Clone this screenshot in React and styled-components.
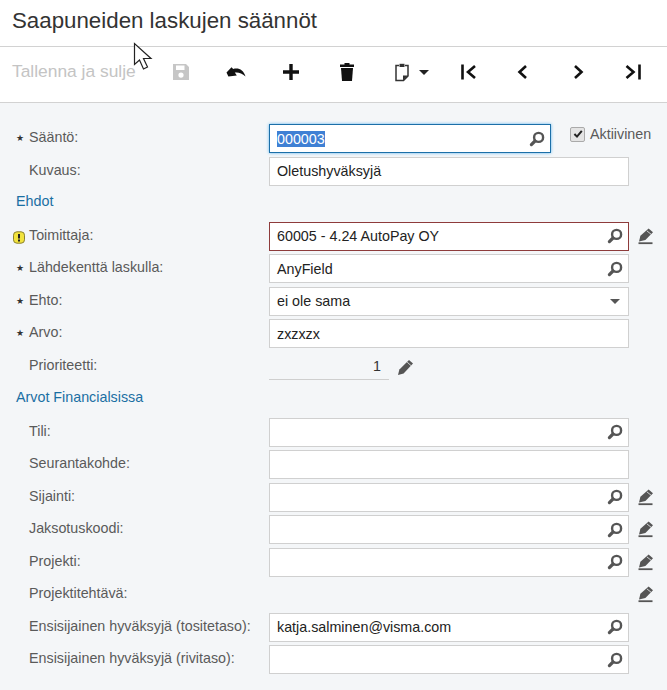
import styled, { createGlobalStyle } from "styled-components";

const GlobalStyle = createGlobalStyle`
  html, body {
    margin: 0;
    padding: 0;
    background: #f4f6f8;
    font-family: "Liberation Sans", Arial, sans-serif;
  }
`;

const SearchIcon = () => (
  <svg width="16" height="16" viewBox="0 0 16 16">
    <circle cx="9.6" cy="6.4" r="4.5" fill="none" stroke="#555" strokeWidth="2.4" />
    <path d="M6 10 2.4 13.6" stroke="#555" strokeWidth="3.2" strokeLinecap="round" />
  </svg>
);

const PencilIcon = () => (
  <svg width="17" height="17" viewBox="0 0 17 17">
    <path d="M12 1 16 4.4 6.6 14.4 1 16 2.4 10.6Z" fill="#555" />
    <path d="M10.2 3.2 14 6.6" stroke="#f4f6f8" strokeWidth="0.8" />
  </svg>
);

const EditUnderlineIcon = () => (
  <svg width="17" height="17" viewBox="0 0 17 17">
    <path d="M11.6 0.6 16 4.2 8.4 12 2 13.4 3.4 7.8Z" fill="#555" />
    <path d="M9.8 2.8 14 6.2" stroke="#f4f6f8" strokeWidth="0.8" />
    <path d="M1.5 15.2H15.5" stroke="#555" strokeWidth="1.8" />
  </svg>
);

const SaveIcon = () => (
  <svg width="18" height="18" viewBox="0 0 18 18">
    <path
      fillRule="evenodd"
      d="M1 1H14L17 4V17H1ZM4 2.5V7H12.5V2.5ZM9 9.5A2.6 2.6 0 1 0 9 14.7 2.6 2.6 0 1 0 9 9.5Z"
      fill="#c6c6c6"
    />
  </svg>
);

const UndoIcon = () => (
  <svg width="20" height="12" viewBox="0 0 20 12">
    <path d="M0.5 6.5 5.5 1.2 7.2 3C12.5 1.4 17.5 3.8 19.5 10.5 16 7 12 6 8.8 6.6L10.8 9.6 2.4 10.6Z" fill="#111" />
  </svg>
);

const PlusIcon = () => (
  <svg width="18" height="18" viewBox="0 0 18 18">
    <path d="M9 1V17M1 9H17" stroke="#111" strokeWidth="3.4" />
  </svg>
);

const TrashIcon = () => (
  <svg width="16" height="20" viewBox="0 0 16 20">
    <path d="M5.5 1H10.5V2.6H15V5H1V2.6H5.5Z" fill="#111" />
    <path d="M2 6H14L13 19H3Z" fill="#111" />
  </svg>
);

const PasteIcon = () => (
  <svg width="14" height="20" viewBox="0 0 14 20">
    <path d="M4 3.5H1V18.5H8.5L13 14V3.5H10" fill="none" stroke="#333" strokeWidth="1.5" />
    <path d="M4.5 1.8H9.5V5H4.5Z" fill="#333" />
    <path d="M8 13.5H13L8 18.5Z" fill="#333" />
  </svg>
);

const Chevron = ({ d }) => (
  <svg width="18" height="18" viewBox="0 0 18 18">
    <path d={d} fill="none" stroke="#111" strokeWidth="2.6" />
  </svg>
);

const WarningIcon = () => (
  <svg width="12" height="13" viewBox="0 0 12 13">
    <rect x="0.5" y="0.8" width="11" height="11.4" rx="3.4" fill="#f2e33c" stroke="#8a8130" />
    <path d="M6 3V7.6" stroke="#222" strokeWidth="2" />
    <path d="M6 8.6V10.4" stroke="#222" strokeWidth="2" />
  </svg>
);

const TOOLS = [
  { icon: <SaveIcon /> },
  { icon: <UndoIcon /> },
  { icon: <PlusIcon /> },
  { icon: <TrashIcon /> },
  { icon: <PasteIcon />, caret: true },
  { icon: <Chevron d="M3.5 1.5V16.5M16 3 9 9 16 15" /> },
  { icon: <Chevron d="M12 3 5.5 9 12 15" /> },
  { icon: <Chevron d="M5 3 11.5 9 5 15" /> },
  { icon: <Chevron d="M1.5 3 8.5 9 1.5 15M14.5 1.5V16.5" /> },
];

const App = () => {
  return (
    <Page>
      <GlobalStyle />
      <TitleBar>Saapuneiden laskujen säännöt</TitleBar>
      <Toolbar>
        <SaveClose>Tallenna ja sulje</SaveClose>
        {TOOLS.map((tool, i) => (
          <ToolButton key={i} $caret={tool.caret}>
            {tool.icon}
            {tool.caret && <ToolCaret />}
          </ToolButton>
        ))}
        <Cursor viewBox="0 0 22 30" width="22" height="30">
          <path
            d="M1.5 1.5V22.5L6.5 18L10.5 27L14.5 25L10.5 16.5H18Z"
            fill="#fff"
            stroke="#222"
            strokeWidth="1.2"
          />
        </Cursor>
      </Toolbar>

      <Form>
        <Row>
          <Label $required>Sääntö:</Label>
          <Field $focused>
            <Selected>000003</Selected>
            <SearchIcon />
          </Field>
          <Active>
            <CheckBox>
              <svg width="10" height="10" viewBox="0 0 10 10">
                <path d="M1.4 5 4 7.6 8.8 1.8" fill="none" stroke="#222" strokeWidth="2" />
              </svg>
            </CheckBox>
            Aktiivinen
          </Active>
        </Row>
        <Row>
          <Label>Kuvaus:</Label>
          <Field>Oletushyväksyjä</Field>
        </Row>

        <Section $height={32.6} $top={4}>Ehdot</Section>

        <Row>
          <Label>
            <WarningSlot>
              <WarningIcon />
            </WarningSlot>
            Toimittaja:
          </Label>
          <Field $error>
            60005 - 4.24 AutoPay OY
            <SearchIcon />
          </Field>
          <Trailing>
            <EditUnderlineIcon />
          </Trailing>
        </Row>
        <Row>
          <Label $required>Lähdekenttä laskulla:</Label>
          <Field>
            AnyField
            <SearchIcon />
          </Field>
        </Row>
        <Row>
          <Label $required>Ehto:</Label>
          <Field>
            ei ole sama
            <SelectCaret />
          </Field>
        </Row>
        <Row>
          <Label $required>Arvo:</Label>
          <Field>zxzxzx</Field>
        </Row>
        <Row>
          <Label>Prioriteetti:</Label>
          <NumberField>1</NumberField>
          <NumberEdit>
            <PencilIcon />
          </NumberEdit>
        </Row>

        <Section $height={33.9} $top={5}>Arvot Financialsissa</Section>

        <Row>
          <Label>Tili:</Label>
          <Field>
            <span />
            <SearchIcon />
          </Field>
        </Row>
        <Row>
          <Label>Seurantakohde:</Label>
          <Field />
        </Row>
        <Row>
          <Label>Sijainti:</Label>
          <Field>
            <span />
            <SearchIcon />
          </Field>
          <Trailing>
            <EditUnderlineIcon />
          </Trailing>
        </Row>
        <Row>
          <Label>Jaksotuskoodi:</Label>
          <Field>
            <span />
            <SearchIcon />
          </Field>
          <Trailing>
            <EditUnderlineIcon />
          </Trailing>
        </Row>
        <Row>
          <Label>Projekti:</Label>
          <Field>
            <span />
            <SearchIcon />
          </Field>
          <Trailing>
            <EditUnderlineIcon />
          </Trailing>
        </Row>
        <Row>
          <Label>Projektitehtävä:</Label>
          <EmptyField />
          <Trailing>
            <EditUnderlineIcon />
          </Trailing>
        </Row>
        <Row>
          <Label>Ensisijainen hyväksyjä (tositetaso):</Label>
          <Field>
            katja.salminen@visma.com
            <SearchIcon />
          </Field>
        </Row>
        <Row>
          <Label>Ensisijainen hyväksyjä (rivitaso):</Label>
          <Field>
            <span />
            <SearchIcon />
          </Field>
        </Row>
      </Form>
    </Page>
  );
};

export default App;

const Page = styled.div`
  width: 667px;
  height: 690px;
  overflow: hidden;
  background: #f4f6f8;
`;

const TitleBar = styled.div`
  height: 46px;
  padding-left: 12px;
  line-height: 41px;
  font-size: 22.3px;
  color: #333;
  background: #fff;
  border-bottom: 1px solid #d2d2d2;
`;

const Toolbar = styled.div`
  position: relative;
  height: 49px;
  display: flex;
  align-items: center;
  padding: 0 0 6px 12px;
  background: #fff;
  border-bottom: 1px solid #d2d2d2;
`;

const SaveClose = styled.span`
  width: 124px;
  margin-right: 17px;
  font-size: 17.4px;
  color: #c4c4c4;
  white-space: nowrap;
`;

const ToolButton = styled.span`
  width: 55.3px;
  flex: none;
  display: flex;
  align-items: center;
  justify-content: center;
  position: relative;
  margin-right: ${(p) => (p.$caret ? "11px" : "0")};
`;

const ToolCaret = styled.i`
  position: absolute;
  left: 45px;
  top: 8px;
  border-left: 5px solid transparent;
  border-right: 5px solid transparent;
  border-top: 5px solid #222;
`;

const Cursor = styled.svg`
  position: absolute;
  left: 133px;
  top: -5px;
`;

const Form = styled.div`
  padding: 21px 0 0 0;
`;

const Row = styled.div`
  height: 32.5px;
  display: flex;
  align-items: flex-start;
`;

const Label = styled.div`
  position: relative;
  width: 269px;
  flex: none;
  box-sizing: border-box;
  padding: 5px 0 0 29px;
  font-size: 14.3px;
  line-height: 16px;
  color: #5a5a5a;
  white-space: nowrap;

  &::before {
    content: ${(p) => (p.$required ? '"★"' : "none")};
    position: absolute;
    left: 16px;
    top: 6px;
    font-family: "DejaVu Sans", sans-serif;
    font-size: 9px;
    color: #333;
  }
`;

const WarningSlot = styled.span`
  position: absolute;
  left: 13px;
  top: 9px;
  line-height: 0;
`;

const Field = styled.div`
  width: ${(p) => (p.$focused ? "282px" : "360px")};
  height: 29px;
  flex: none;
  box-sizing: border-box;
  display: flex;
  align-items: center;
  justify-content: space-between;
  padding: 0 5px 0 7px;
  background: #fff;
  font-size: 14.3px;
  color: #222;
  border: 1px solid ${(p) => (p.$focused ? "#1c6fa8" : p.$error ? "#8e3b3b" : "#d0d0d0")};
  box-shadow: ${(p) => (p.$focused ? "0 0 3px #5fb6ee" : "none")};
`;

const EmptyField = styled.div`
  width: 360px;
  height: 29px;
  flex: none;
`;

const Selected = styled.span`
  background: #3f80d4;
  color: #fff;
`;

const Active = styled.label`
  margin: 2px 0 0 19px;
  display: flex;
  align-items: center;
  gap: 5px;
  font-size: 14.3px;
  color: #5a5a5a;
`;

const CheckBox = styled.span`
  width: 13px;
  height: 13px;
  display: flex;
  align-items: center;
  justify-content: center;
  background: #e4e4e4;
  border: 1px solid #aaa;
  border-radius: 2px;
`;

const Trailing = styled.span`
  margin: 6px 0 0 8px;
  line-height: 0;
`;

const NumberField = styled.div`
  width: 120px;
  height: 28px;
  flex: none;
  box-sizing: border-box;
  padding: 6px 8px 0 0;
  text-align: right;
  font-size: 14.3px;
  line-height: 16px;
  color: #333;
  border-bottom: 1px solid #cfcfcf;
`;

const NumberEdit = styled.span`
  margin: 7px 0 0 8px;
  line-height: 0;
`;

const Section = styled.div`
  height: ${(p) => p.$height}px;
  box-sizing: border-box;
  padding: ${(p) => p.$top}px 0 0 16px;
  font-size: 14.3px;
  line-height: 16px;
  color: #1a6fa3;
`;

const SelectCaret = styled.i`
  border-left: 5px solid transparent;
  border-right: 5px solid transparent;
  border-top: 5px solid #555;
  margin-right: 3px;
`;
